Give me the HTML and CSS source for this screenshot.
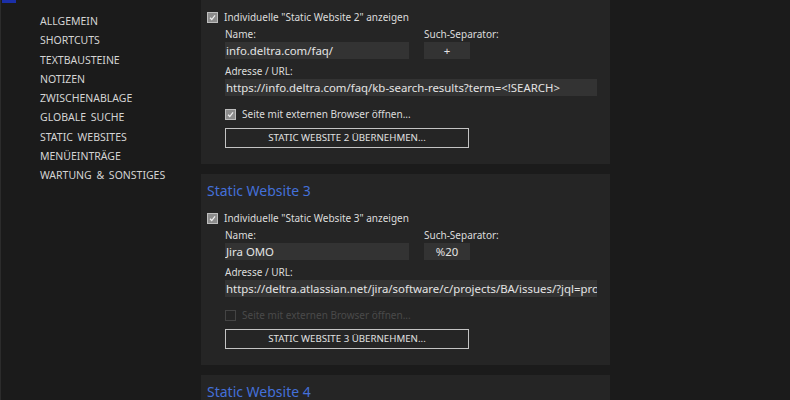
FILE: index.html
```html
<!DOCTYPE html>
<html>
<head>
<meta charset="utf-8">
<link rel="stylesheet" href="styles.css">
</head>
<body>
<div class="sidebar">
  <div class="accent"></div>
  <ul class="menu">
    <li>ALLGEMEIN</li>
    <li>SHORTCUTS</li>
    <li>TEXTBAUSTEINE</li>
    <li>NOTIZEN</li>
    <li>ZWISCHENABLAGE</li>
    <li>GLOBALE SUCHE</li>
    <li>STATIC WEBSITES</li>
    <li>MENÜEINTRÄGE</li>
    <li>WARTUNG &amp; SONSTIGES</li>
  </ul>
</div>

<div class="content">
  <div class="panel">
    <h2>Static Website 2</h2>
    <div class="check">
      <span class="box on"><svg viewBox="0 0 11 11"><path d="M2.5 5.8 L4.6 8 L8.6 3"/></svg></span>
      Individuelle "Static Website 2" anzeigen
    </div>
    <div class="fields">
      <div class="row">
        <div class="field name">
          <label>Name:</label>
          <div class="input">info.deltra.com/faq/</div>
        </div>
        <div class="field sep">
          <label>Such-Separator:</label>
          <div class="input center">+</div>
        </div>
      </div>
      <div class="field">
        <label class="gap">Adresse / URL:</label>
        <div class="input url">https://info.deltra.com/faq/kb-search-results?term=&lt;!SEARCH&gt;</div>
      </div>
      <div class="check sub">
        <span class="box on"><svg viewBox="0 0 11 11"><path d="M2.5 5.8 L4.6 8 L8.6 3"/></svg></span>
        Seite mit externen Browser öffnen...
      </div>
      <div class="button">STATIC WEBSITE 2 ÜBERNEHMEN...</div>
    </div>
  </div>

  <div class="panel">
    <h2>Static Website 3</h2>
    <div class="check">
      <span class="box on"><svg viewBox="0 0 11 11"><path d="M2.5 5.8 L4.6 8 L8.6 3"/></svg></span>
      Individuelle "Static Website 3" anzeigen
    </div>
    <div class="fields">
      <div class="row">
        <div class="field name">
          <label>Name:</label>
          <div class="input">Jira OMO</div>
        </div>
        <div class="field sep">
          <label>Such-Separator:</label>
          <div class="input center">%20</div>
        </div>
      </div>
      <div class="field">
        <label class="gap">Adresse / URL:</label>
        <div class="input url">https://deltra.atlassian.net/jira/software/c/projects/BA/issues/?jql=project%20%3D%20BA</div>
      </div>
      <div class="check sub disabled">
        <span class="box"></span>
        Seite mit externen Browser öffnen...
      </div>
      <div class="button">STATIC WEBSITE 3 ÜBERNEHMEN...</div>
    </div>
  </div>

  <div class="panel">
    <h2>Static Website 4</h2>
  </div>
</div>
</body>
</html>
```

FILE: styles.css
```css
html,
body {
  margin: 0;
  height: 100%;
  overflow: hidden;
}
body {
  display: flex;
  background-color: #1b1b1b;
  border-left: 1px solid #2c2c2c;
  font-family: 'Noto Sans', 'Open Sans', sans-serif;
  color: #d6d6d6;
}
.sidebar {
  width: 200px;
  flex-shrink: 0;
}
.accent {
  width: 14px;
  height: 3px;
  margin-left: 1px;
  background-color: #1b2fa8;
}
.menu {
  list-style: none;
  margin: 9px 0 0 0;
  padding: 0 0 0 39px;
  font-size: 10.5px;
}
.menu li {
  height: 19.3px;
  line-height: 19.3px;
  word-spacing: 2px;
  color: #d4d4d4;
}
.content {
  width: 409px;
  margin-top: -27px;
  display: flex;
  flex-direction: column;
  gap: 10px;
}
.panel {
  background-color: #252525;
  padding: 8px 0 16px 6px;
}
.panel h2 {
  margin: 0;
  font-size: 14px;
  font-weight: normal;
  line-height: 18px;
  color: #4470d8;
}
.check {
  display: flex;
  align-items: center;
  gap: 6px;
  height: 14px;
  margin-top: 11px;
  font-size: 10px;
  color: #dcdcdc;
  white-space: nowrap;
}
.box {
  width: 11px;
  height: 11px;
  box-sizing: border-box;
  border: 1px solid #444;
  flex-shrink: 0;
  display: block;
}
.box.on {
  border-color: #bdbdbd;
  background-color: #8c8c8c;
}
.box svg {
  display: block;
  width: 9px;
  height: 9px;
}
.box svg path {
  fill: none;
  stroke: #eeeeee;
  stroke-width: 1.5;
}
.fields {
  padding-left: 18px;
  width: 372px;
}
.row {
  display: flex;
  gap: 15px;
}
.field label {
  display: block;
  height: 14px;
  line-height: 14px;
  margin-top: 3px;
  font-size: 10px;
  color: #dcdcdc;
  white-space: nowrap;
}
.field label.gap {
  margin-top: 5px;
}
.input {
  margin-top: 1px;
  height: 17px;
  line-height: 17px;
  background-color: #333333;
  padding-left: 1px;
  font-size: 11.4px;
  color: #e4e4e4;
  white-space: nowrap;
  overflow: hidden;
}
.name {
  width: 184px;
}
.sep {
  width: 46px;
}
.center {
  text-align: center;
  padding-left: 0;
}
.url {
  width: 371px;
}
.check.sub {
  margin-top: 11px;
}
.disabled {
  color: #4a4a4a;
}
.button {
  margin-top: 7px;
  width: 244px;
  height: 20px;
  box-sizing: border-box;
  border: 1px solid #c4c4c4;
  text-align: center;
  line-height: 18px;
  font-size: 9.7px;
  color: #e0e0e0;
}
```
